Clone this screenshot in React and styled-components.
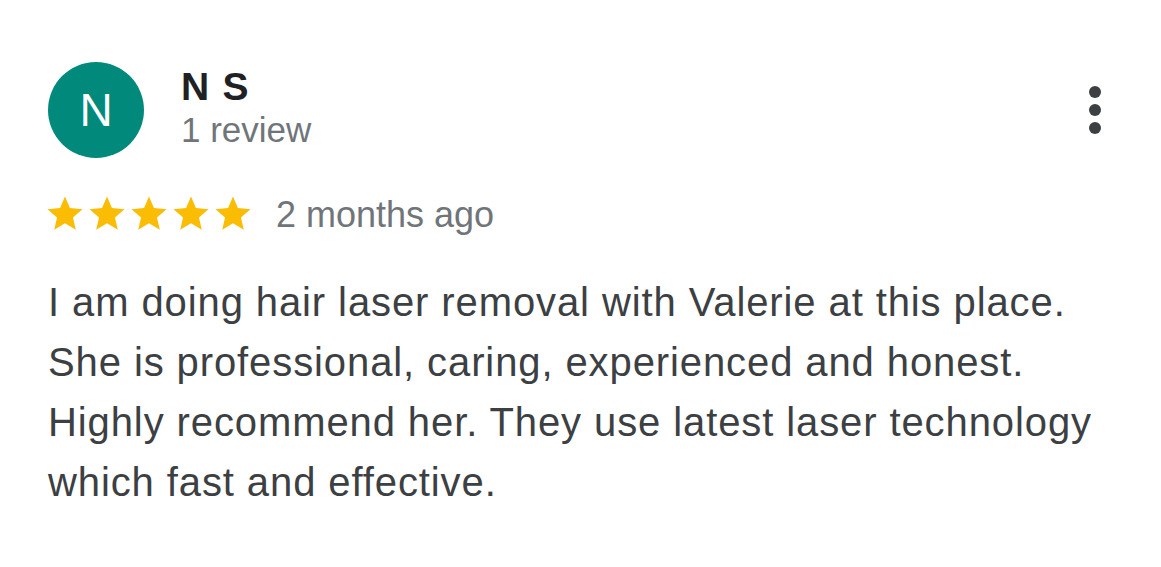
import React from "react";
import styled, { createGlobalStyle } from "styled-components";

const Global = createGlobalStyle`
  html, body { margin: 0; padding: 0; background: #ffffff; }
  body { font-family: "Liberation Sans", Arial, Helvetica, sans-serif; }
`;

const Card = styled.div`
  width: 1161px;
  height: 567px;
  box-sizing: border-box;
  padding: 62px 48px 0 48px;
  background: #fff;
  display: flex;
  flex-direction: column;
`;

const Header = styled.div`
  display: flex;
  align-items: flex-start;
`;

const Avatar = styled.div`
  width: 96px;
  height: 96px;
  border-radius: 50%;
  background: ${(p) => p.$color};
  color: #fff;
  display: flex;
  align-items: center;
  justify-content: center;
  font-size: 46px;
  flex-shrink: 0;
`;

const Who = styled.div`
  margin-left: 34px;
  display: flex;
  flex-direction: column;
  flex: 1;
`;

const Name = styled.div`
  font-size: 39px;
  font-weight: 700;
  letter-spacing: 1.2px;
  color: #202124;
  line-height: 44px;
  margin-top: 3px;
  margin-left: 3px;
`;

const Sub = styled.div`
  font-size: 35px;
  color: #70757a;
  line-height: 44px;
  margin-left: 3px;
  margin-top: -1px;
`;

const MenuButton = styled.button`
  border: 0;
  background: none;
  padding: 0;
  margin: 24px 12px 0 0;
  display: flex;
  flex-direction: column;
  gap: 6px;
  cursor: pointer;
`;

const Dot = styled.span`
  width: 12px;
  height: 12px;
  border-radius: 50%;
  background: #3c4043;
`;

const RatingRow = styled.div`
  display: flex;
  align-items: center;
  margin-top: 34px;
  margin-left: -4px;
`;

const Stars = styled.div`
  display: flex;
`;

const Date = styled.span`
  font-size: 36px;
  color: #70757a;
  margin-left: 22px;
  margin-top: 2px;
`;

const Body = styled.p`
  margin: 36px 0 0 0;
  font-size: 40px;
  letter-spacing: 0.9px;
  line-height: 60px;
  color: #3c4043;
`;

const Star = () => (
  <svg width="42" height="42" viewBox="0 0 24 24">
    <path
      fill="#fbbc04"
      d="M12 17.27L18.18 21l-1.64-7.03L22 9.24l-7.19-.61L12 2 9.19 8.63 2 9.24l5.46 4.73L5.82 21z"
    />
  </svg>
);

export default function App() {
  return (
    <>
      <Global />
      <Card>
        <Header>
          <Avatar $color="#01897b">N</Avatar>
          <Who>
            <Name>N S</Name>
            <Sub>1 review</Sub>
          </Who>
          <MenuButton aria-label="More">
            <Dot />
            <Dot />
            <Dot />
          </MenuButton>
        </Header>
        <RatingRow>
          <Stars>
            <Star />
            <Star />
            <Star />
            <Star />
            <Star />
          </Stars>
          <Date>2 months ago</Date>
        </RatingRow>
        <Body>
          I am doing hair laser removal with Valerie at this place.
          <br />
          She is professional, caring, experienced and honest.
          <br />
          Highly recommend her. They use latest laser technology
          <br />
          which fast and effective.
        </Body>
      </Card>
    </>
  );
}
